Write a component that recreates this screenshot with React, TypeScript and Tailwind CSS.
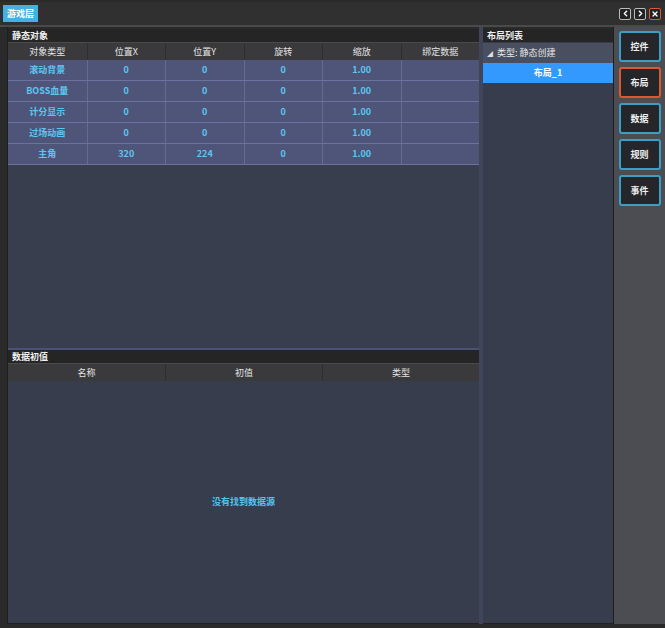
import { ChevronLeft, ChevronRight, X } from 'lucide-react';

const COLUMNS = ['对象类型', '位置X', '位置Y', '旋转', '缩放', '绑定数据'];

const ROWS = [
  ['滚动背景', '0', '0', '0', '1.00', ''],
  ['BOSS血量', '0', '0', '0', '1.00', ''],
  ['计分显示', '0', '0', '0', '1.00', ''],
  ['过场动画', '0', '0', '0', '1.00', ''],
  ['主角', '320', '224', '0', '1.00', ''],
];

const SIDE_BUTTONS = [
  { label: '控件', active: false },
  { label: '布局', active: true },
  { label: '数据', active: false },
  { label: '规则', active: false },
  { label: '事件', active: false },
];

function SectionHeader({ title }: { title: string }) {
  return (
    <div className="h-[13px] bg-[#252525] flex items-center px-[4px] text-[9px] font-bold text-[#f0f0f0] leading-none">
      {title}
    </div>
  );
}

function WinButton({ children, danger }: { children: React.ReactNode; danger?: boolean }) {
  return (
    <div
      className={`w-[12px] h-[12px] rounded-[2px] border flex items-center justify-center bg-[#222] ${
        danger ? 'border-[#e0562a]' : 'border-[#bbb]'
      }`}
    >
      {children}
    </div>
  );
}

export default function App() {
  return (
    <div
      className="w-[665px] h-[628px] bg-[#2a2a2a] flex flex-col overflow-hidden"
      style={{ fontFamily: '"Noto Sans CJK SC", "Noto Sans", sans-serif' }}
    >
      {/* title bar */}
      <div className="h-[25px] mt-[2px] bg-[#303030] border-b-2 border-[#4a4a4a] flex items-center pl-[3px] pr-[4px]">
        <div className="h-[17px] px-[4px] bg-[#45b1e2] text-white text-[9px] font-bold flex items-center">游戏层</div>
        <div className="ml-auto flex gap-[3px]">
          <WinButton>
            <ChevronLeft className="w-[9px] h-[9px] text-white" strokeWidth={4} />
          </WinButton>
          <WinButton>
            <ChevronRight className="w-[9px] h-[9px] text-white" strokeWidth={4} />
          </WinButton>
          <WinButton danger>
            <X className="w-[8px] h-[8px] text-white" strokeWidth={4} />
          </WinButton>
        </div>
      </div>

      {/* body */}
      <div className="flex-1 flex pl-[7px] pb-[4px] min-h-0">
        {/* left main panel */}
        <div className="w-[472px] flex flex-col border-l border-[#1e1e1e] pt-[2px]">
          <SectionHeader title="静态对象" />
          <div className="flex-1 flex flex-col bg-[#393e4f]">
            <div className="grid grid-cols-6 h-[18px] bg-[#3a3a3c] border-t border-[#4a4a4a]">
              {COLUMNS.map((c, i) => (
                <div
                  key={c}
                  className={`flex items-center justify-center text-[9px] text-[#e4e4e4] ${
                    i > 0 ? 'border-l border-[#2e2e2e]' : ''
                  }`}
                >
                  {c}
                </div>
              ))}
            </div>
            {ROWS.map((row, r) => (
              <div key={r} className="grid grid-cols-6 h-[21px] bg-[#4e5578] border-b border-[#6b71a0]">
                {row.map((cell, i) => (
                  <div
                    key={i}
                    className={`flex items-center justify-center text-[9px] font-bold text-[#5cc6f2] ${
                      i > 0 ? 'border-l border-[#646a96]' : ''
                    }`}
                  >
                    {cell}
                  </div>
                ))}
              </div>
            ))}
            <div className="flex-1" />
            <div className="h-[2px] bg-[#4b5275]" />
          </div>
          <div className="h-[274px] flex flex-col">
            <SectionHeader title="数据初值" />
            <div className="grid grid-cols-3 h-[18px] bg-[#3a3a3c] border-t border-[#4a4a4a]">
              {['名称', '初值', '类型'].map((c, i) => (
                <div
                  key={c}
                  className={`flex items-center justify-center text-[9px] text-[#e4e4e4] ${
                    i > 0 ? 'border-l border-[#2e2e2e]' : ''
                  }`}
                >
                  {c}
                </div>
              ))}
            </div>
            <div className="flex-1 bg-[#383d4e] flex items-center justify-center border-b border-[#222]">
              <span className="text-[9px] text-[#55c3ee] font-bold">没有找到数据源</span>
            </div>
          </div>
        </div>

        {/* splitter */}
        <div className="w-[4px] bg-[#40465a]" />

        {/* layout list */}
        <div className="w-[131px] flex flex-col pt-[2px] border-r border-[#1e1e1e]">
          <SectionHeader title="布局列表" />
          <div className="flex-1 bg-[#383d4e] pt-[1px] border-b border-[#222]">
            <div className="h-[20px] bg-[#4a4f5f] flex items-center pl-[4px] gap-[4px] text-[9px] text-[#e8e8e8]">
              <span className="text-[6px] text-[#ddd]">◢</span>
              <span>类型: 静态创建</span>
            </div>
            <div className="h-[20px] bg-[#3399ff] flex items-center justify-center text-[9px] font-bold text-white">
              布局_1
            </div>
          </div>
        </div>

        {/* side buttons */}
        <div className="flex-1 bg-[#4b4d52] flex flex-col items-center pt-[4px] gap-[5px]">
          {SIDE_BUTTONS.map((b) => (
            <div
              key={b.label}
              className={`w-[42px] h-[31px] rounded-[3px] border-2 bg-[#24262a] flex items-center justify-center text-[9px] font-bold text-[#eee] ${
                b.active ? 'border-[#d85a30]' : 'border-[#3b9ec4]'
              }`}
            >
              {b.label}
            </div>
          ))}
        </div>
      </div>
    </div>
  );
}
